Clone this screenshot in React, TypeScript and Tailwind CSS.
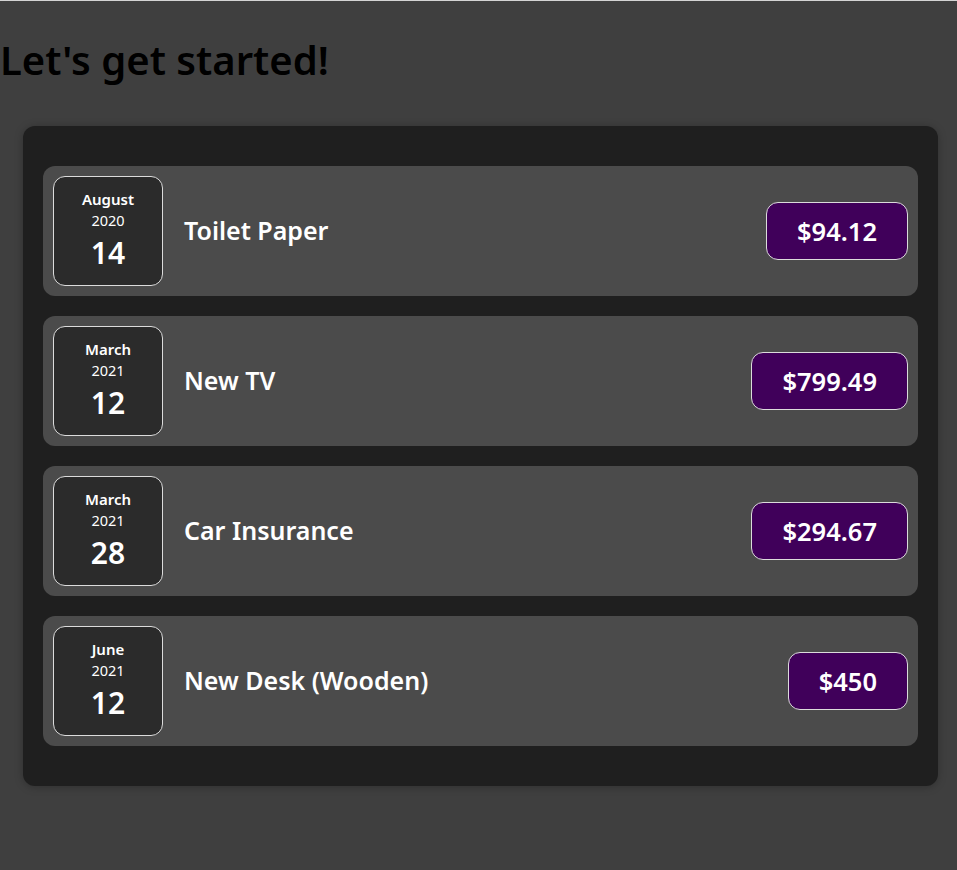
import React from "react";

const items = [
  { month: "August", year: "2020", day: "14", title: "Toilet Paper", price: "$94.12" },
  { month: "March", year: "2021", day: "12", title: "New TV", price: "$799.49" },
  { month: "March", year: "2021", day: "28", title: "Car Insurance", price: "$294.67" },
  { month: "June", year: "2021", day: "12", title: "New Desk (Wooden)", price: "$450" },
];

export default function App() {
  return (
    <div
      className="min-h-[870px] bg-[#3f3f3f] border-t border-[#d4d4d4]"
      style={{ fontFamily: "'Noto Sans', sans-serif" }}
    >
      <h1 className="pt-[34px] text-[40px] leading-[50px] font-semibold text-black m-0">Let's get started!</h1>
      <div className="mt-[41px] mx-[23px] w-[915px] rounded-[12px] bg-[#1f1f1f] px-[20px] py-[40px] flex flex-col gap-[20px] shadow-[0_1px_8px_rgba(0,0,0,0.25)]">
        {items.map((it, i) => (
          <div key={i} className="h-[130px] rounded-[12px] bg-[#4b4b4b] p-[10px] flex items-center">
            <div className="w-[110px] h-[110px] rounded-[12px] border border-[#dcdcdc] bg-[#2b2b2b] flex flex-col items-center text-white">
              <div className="mt-[12px] text-[15px] leading-[20px] font-semibold">{it.month}</div>
              <div className="mt-[2px] text-[14.5px] leading-[18px]">{it.year}</div>
              <div className="mt-[7px] text-[30px] leading-[34px] font-semibold">{it.day}</div>
            </div>
            <div className="ml-[21px] flex-1 text-[25px] font-semibold text-white">{it.title}</div>
            <div className="h-[58px] rounded-[12px] border border-[#dcdcdc] bg-[#40005a] px-[30px] flex items-center text-[25.5px] font-semibold text-white">
              {it.price}
            </div>
          </div>
        ))}
      </div>
    </div>
  );
}
